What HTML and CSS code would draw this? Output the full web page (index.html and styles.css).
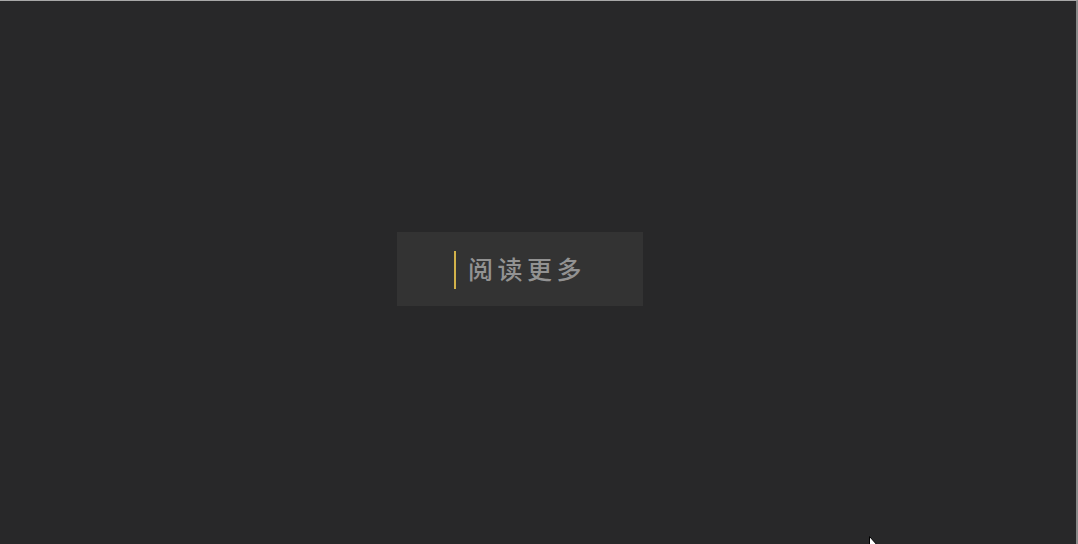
FILE: index.html
```html
<!DOCTYPE html>
<html lang="zh-CN">
<head>
<meta charset="utf-8">
<title>阅读更多</title>
<link rel="stylesheet" href="styles.css">
</head>
<body>
<main class="stage">
  <a class="more-btn" href="#">
    <span class="more-bar"></span>
    <span class="more-text">阅读更多</span>
  </a>
</main>
<svg class="cursor" width="12" height="10" viewBox="0 0 12 10"><path d="M0.5 0.5 L0.5 10 L3 10 L9 10 Z" fill="#fff" stroke="#000" stroke-width="1"/></svg>
</body>
</html>
```
FILE: styles.css
```css
html, body {
  margin: 0;
  padding: 0;
  height: 100%;
}
body {
  background: #282829;
  border-top: 1px solid #a8a8a8;
  border-right: 2px solid #8a8a8a;
  box-sizing: border-box;
  overflow: hidden;
  position: relative;
  font-family: "Noto Sans CJK SC", "Noto Sans", sans-serif;
}
.stage {
  display: flex;
  padding: 231px 0 0 397px;
}
.more-btn {
  display: flex;
  align-items: center;
  width: 246px;
  height: 74px;
  box-sizing: border-box;
  padding-left: 57px;
  background: #333333;
  text-decoration: none;
  gap: 12px;
}
.more-bar {
  width: 2px;
  height: 38px;
  background: #d2b24a;
  margin-top: 1px;
}
.more-text {
  color: #929292;
  font-size: 25px;
  font-weight: 500;
  letter-spacing: 4.5px;
  line-height: 1;
  margin-top: -1px;
}
.cursor {
  position: absolute;
  left: 869px;
  top: 535px;
}
```
